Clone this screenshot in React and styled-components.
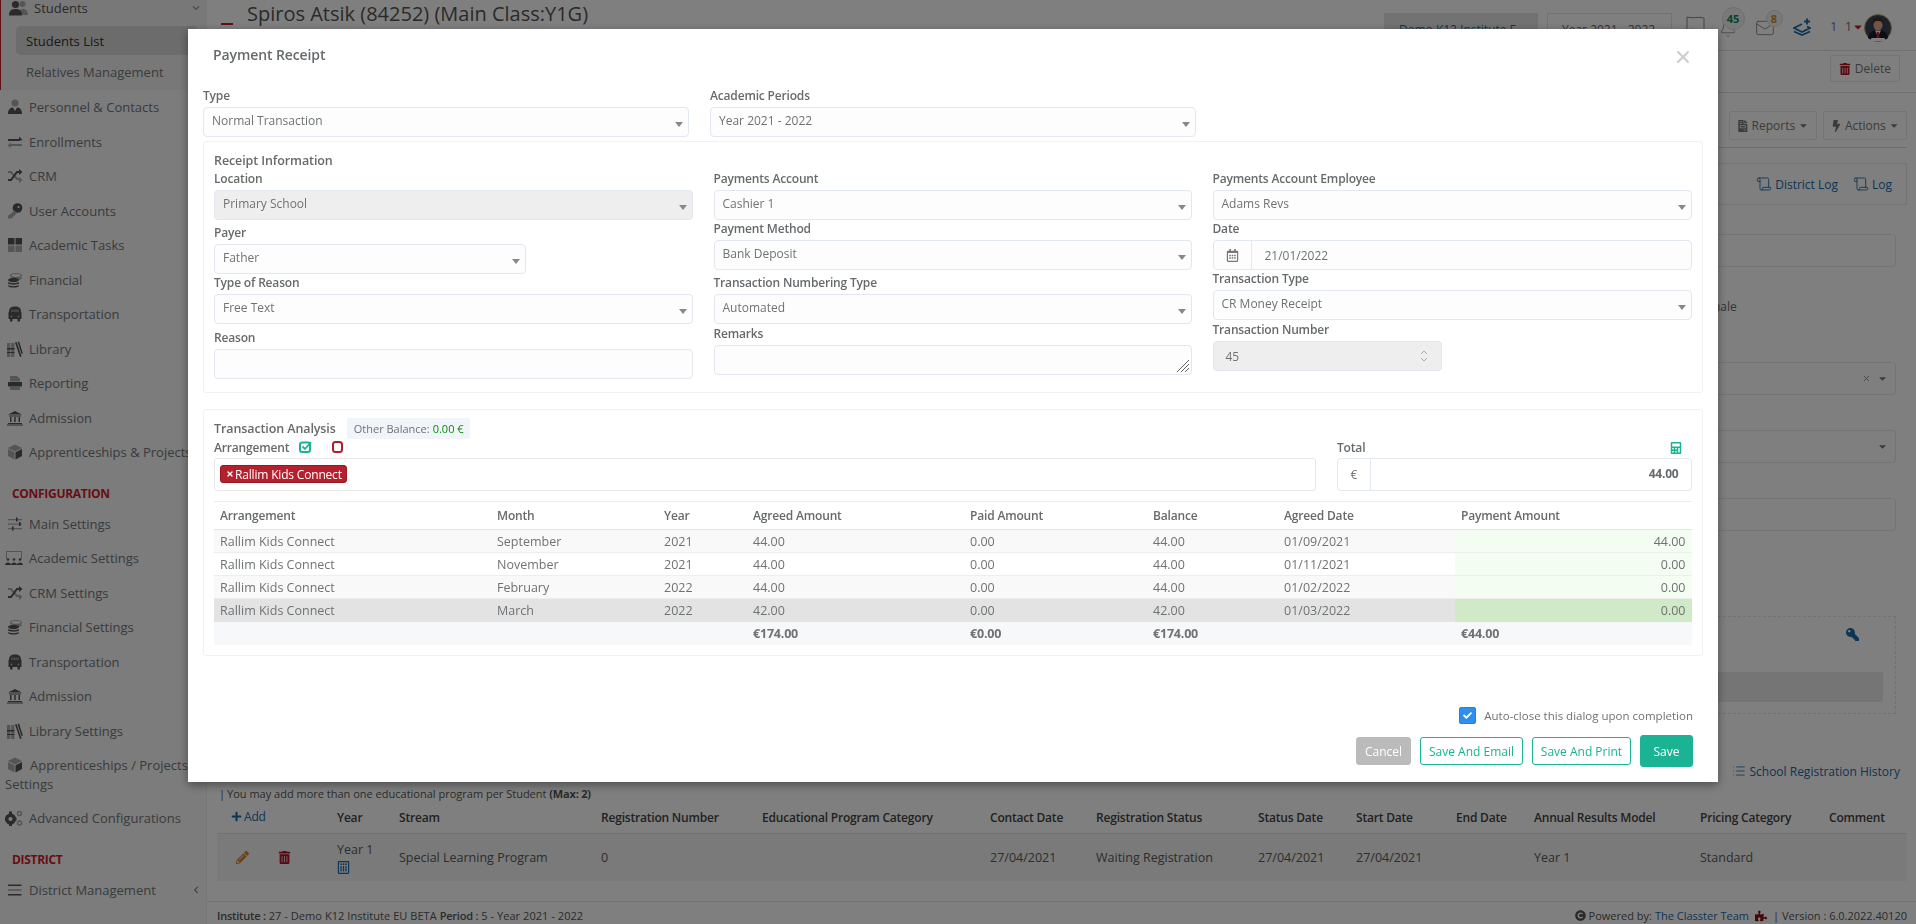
import React from "react";
import styled, { createGlobalStyle } from "styled-components";
import {
  FaTrashAlt, FaFileInvoice, FaBolt, FaPencilAlt, FaRegCalendarAlt, FaKey,
  FaCalculator, FaCheck, FaPlus, FaCopyright, FaChevronDown, FaChevronLeft, FaCaretDown, FaRegListAlt, FaPuzzlePiece,
} from "react-icons/fa";
import { Scroll, List, Bell, Mail, X } from "lucide-react";

const Global = createGlobalStyle`
  html, body { margin: 0; padding: 0; height: 100%; overflow: hidden; background: #fff; }
  body { font-family: "Open Sans", "Liberation Sans", sans-serif; font-size: 12px; color: #6f7274; }
  * { box-sizing: border-box; }
`;

const Page = styled.div`display: flex; height: 924px; width: 1916px; overflow: hidden; background: #fff;`;

/* ---------- sidebar ---------- */
const Sidebar = styled.nav`width: 207px; flex: none; background: #f8f8f8; border-right: 1px solid #eee; color: #747678; font-size: 13px;`;
const Group = styled.div`margin-top: -9px; height: 99px; border-left: 1px solid #c0222e; background: #f1f1f1;`;
const GroupHead = styled.div`height: 34px; display: flex; align-items: center; padding-left: 8px; gap: 6px; color: #555;
  > svg:last-child { margin-left: auto; margin-right: 6px; color: #999; }`;
const Sub = styled.div`height: ${p => (p.$active ? 29 : 30)}px; margin: ${p => (p.$active ? "1px 8px 2px 15px" : "0 8px 0 15px")};
  display: flex; align-items: center; padding-left: 10px; border-radius: 5px; background: ${p => (p.$active ? "#d8d8d8" : "transparent")}; color: ${p => (p.$active ? "#333" : "#747678")};`;
const Item = styled.div`height: 34.5px; display: grid; grid-template-columns: 23px auto 1fr; align-items: center; padding-left: 6px; white-space: nowrap;
  > svg:first-child { justify-self: end; margin-right: 6px; }`;
const EndChevron = styled.span`justify-self: end; margin-right: 6px; color: #888; display: flex;`;
const WrapItem = styled.div`height: 53px; padding: 8px 0 0 5px; line-height: 19px; width: 198px;
  > svg { margin: 0 7px 0 2px; vertical-align: -3px; }`;
const Section = styled.div`height: 37.2px; padding: 10px 0 0 12px; display: flex; align-items: center; color: #d01c28; font-weight: 700; font-size: 12px; letter-spacing: -.3px;`;

/* ---------- page behind the dialog ---------- */
const Main = styled.main`flex: 1; min-width: 0; display: flex; flex-direction: column; position: relative; padding-right: 9px;`;
const TopBar = styled.header`height: 51px; flex: none; margin-right: -9px; padding: 0 24px 0 14px; border-bottom: 1px solid #e1e1e1; display: flex; align-items: flex-start;`;
const Burger = styled.span`margin-top: 23px; width: 12px; height: 10px; border-top: 2px solid #c0222e; border-bottom: 2px solid #c0222e; flex: none;`;
const Title = styled.h1`margin: 0 0 0 14px; font-size: 20px; font-weight: 400; line-height: 28px; color: #555;`;
const TopRight = styled.div`margin-left: auto; display: flex; align-items: flex-start; height: 30px; margin-top: 13px;`;
const Context = styled.div`height: 32px; padding: 0 0 0 14px; display: flex; align-items: center; font-size: 12px; width: ${p => p.$w}px; margin-right: ${p => p.$mr}px;
  color: ${p => (p.$blue ? "#1a6aa8" : "#666")}; background: ${p => (p.$blue ? "#e4e4e4" : "#fff")}; border: 1px solid #e4e4e4;`;
const IconWrap = styled.span`position: relative; display: flex; color: ${p => p.$c || "#888"}; width: ${p => p.$w}px; justify-content: center; margin: ${p => p.$mt || 0}px 0 0 ${p => p.$ml || 0}px;`;
const Badge = styled.span`position: absolute; width: ${p => p.$d}px; height: ${p => p.$d}px; border-radius: 50%; background: #f2f2f2; border: 1px solid #ddd; color: ${p => p.$c};
  font-size: 11px; font-weight: 700; display: flex; align-items: center; justify-content: center; left: ${p => p.$l}px; top: ${p => p.$t}px;`;
const UserText = styled.span`margin: 4px 0 0 19px; width: 22px; line-height: 18px; font-size: 13px; letter-spacing: 2px; color: #777; white-space: nowrap;`;
const UserCaret = styled.span`color: #c0222e; display: flex; width: 12px; margin-top: 8px;`;
const AvatarBox = styled.span`display: block; margin-top: 1px;`;

const DeleteBar = styled.div`height: 42px; flex: none; margin-right: -9px; border-bottom: 1px solid #e1e1e1; display: flex; justify-content: flex-end; padding: 4px 16px 0 0;`;
const GhostBtn = styled.span`height: ${p => p.$h || 27}px; width: ${p => (p.$w ? p.$w + "px" : "auto")}; padding: 0 8px; border: 1px solid #e8e8e8; border-radius: 2px; display: inline-flex; align-items: center; justify-content: center; gap: 4px; font-size: 12px; color: #777;`;
const TrashRed = styled(FaTrashAlt)`color: #b5121e;`;
const ToolRow = styled.div`height: 55px; flex: none; padding-top: 18px; display: flex; justify-content: flex-end; gap: 6px; border-bottom: 1px solid #ddd;`;
const LogPanel = styled.div`height: 42px; margin-top: 15px; flex: none; border: 1px solid #e8e8e8; display: flex; justify-content: flex-end; align-items: center; gap: 15px; padding-right: 14px;`;
const BlueLink = styled.span`display: inline-flex; align-items: center; gap: 3px; color: #1a6aa8; font-size: 12px;`;
const FakeInput = styled.div`height: 33px; margin: ${p => p.$mt}px 11px 0 0; flex: none; border: 1px solid #e8e8e8; border-radius: 3px; display: flex; justify-content: flex-end; align-items: center; gap: 6px; padding-right: 7px; color: #777;`;
const GenderText = styled.div`margin-top: 31px; height: 18px; flex: none; padding-left: 1506px; line-height: 18px; font-size: 12px; color: #676a6c;`;
const Dotted = styled.div`height: 98px; margin: 85px 11px 0 0; flex: none; border: 1px dashed #e4e4e4; display: flex; flex-direction: column; align-items: flex-end; padding: 11px 12px 0 0;`;
const KeyIcon = styled(FaKey)`color: #1a6aa8; font-size: 13px; transform: scaleX(-1); margin-right: 24px;`;
const InnerGray = styled.div`height: 30px; width: 300px; margin-top: 31px; background: #eaeaea; border: 1px solid #e8e8e8; border-radius: 2px;`;
const HistoryRow = styled.div`height: 20px; margin-top: 47px; flex: none; display: flex; justify-content: flex-end; padding-right: 7px;`;
const Note = styled.div`margin: 5px 0 0 12px; height: 16px; line-height: 16px; flex: none; font-size: 11px; color: #555;
  &::before { content: "|"; margin-right: 2px; }
  b { font-weight: 700; letter-spacing: -.2px; }`;
const BackTable = styled.table`width: 1690px; margin-left: 10px; table-layout: fixed; border-collapse: collapse; font-size: 12px; flex: none;`;
const BackCol = styled.col`width: ${p => p.$w}px;`;
const BackTh = styled.th`height: 31px; padding: 0; text-align: left; font-weight: 600; color: #444; border-bottom: 1px solid #e4e4e4; letter-spacing: -.2px; white-space: nowrap;`;
const BackTd = styled.td`height: 48px; padding: 0; background: #f5f5f5; color: #5a5a5a; font-size: 12.5px; white-space: nowrap;`;
const AddLink = styled.span`display: inline-flex; align-items: center; gap: 2px; padding-left: 14px; color: #1a6aa8; font-weight: 400;`;
const RowIcons = styled.span`display: flex; gap: 29px; padding-left: 19px; align-items: center;`;
const Pencil = styled(FaPencilAlt)`color: #d9822b; font-size: 13px;`;
const ListGlyph = styled(FaRegListAlt)`display: block; color: #1a6aa8; font-size: 13px; transform: rotate(90deg); margin-top: 3px;`;
const Footer = styled.footer`margin: auto -9px 0 0; height: 23px; flex: none; border-top: 1px solid #e4e4e4; display: flex; align-items: center; justify-content: space-between; padding: 5px 9px 0 10px; font-size: 11px; color: #555;
  b { font-weight: 600; letter-spacing: -.2px; } a { color: #1a6aa8; }`;
const FooterLeft = styled.span`letter-spacing: .05px;`;
const FooterRight = styled.span`display: inline-flex; align-items: center; gap: 3px;`;
const TeamGlyph = styled.span`color: #8a1118; display: inline-flex; margin: 0 3px;`;

/* ---------- dialog ---------- */
const Overlay = styled.div`position: fixed; inset: 0; background: rgba(0, 0, 0, .5);`;
const Modal = styled.section`position: fixed; left: 188px; top: 29px; width: 1530px; height: 753px; background: #fff; box-shadow: 0 3px 9px rgba(0,0,0,.4); padding: 0 15px;`;
const ModalHead = styled.div`height: 59px; display: flex; align-items: flex-start; justify-content: space-between; padding: 16px 10px 0 10px;`;
const ModalTitle = styled.h2`margin: 0; font-size: 14px; line-height: 19px; font-weight: 600; color: #676a6c; letter-spacing: -.1px;`;
const Close = styled(X)`color: #ccc; margin-top: 2px;`;
const TopFields = styled.div`display: grid; grid-template-columns: 486px 486px; column-gap: 21px;`;
const Label = styled.div`height: ${p => p.$h || 20}px; line-height: ${p => (p.$h || 20) - (p.$up || 2)}px; margin-top: ${p => p.$mt || 0}px; font-size: 12px; font-weight: 600; color: #676a6c; letter-spacing: -.17px; white-space: nowrap;`;
const Select = styled.div`height: 30px; display: flex; align-items: center; justify-content: space-between; padding: 0 5px 3px 8px; font-size: 12px; color: #6f7274; width: ${p => p.$w ? p.$w + "px" : "auto"};
  border: 1px solid #e3e7ef; border-radius: 4px; background: ${p => (p.$disabled ? "#eeeeee" : "#fdfdfd")};
  &::after { content: ""; border: 4px solid transparent; border-top: 5px solid #888; border-bottom: 0; margin-top: 7px; }`;
const TextBox = styled.div`height: 30px; border: 1px solid #e3e7ef; border-radius: 4px; background: #fdfdfd; position: relative;`;
const Grip = styled.svg`position: absolute; right: 1px; bottom: 1px;`;
const DateGroup = styled.div`height: 30px; display: flex; border: 1px solid #e3e7ef; border-radius: 4px; background: #fdfdfd; font-size: 12px; color: #6f7274;`;
const Addon = styled.span`width: ${p => p.$w}px; flex: none; display: flex; align-items: center; justify-content: center; border-right: 1px solid #e3e7ef; color: #777;`;
const DateValue = styled.span`padding-left: 13px; display: flex; align-items: center;`;
const NumberBox = styled.div`height: 30px; width: 229px; display: flex; align-items: center; justify-content: space-between; padding: 0 13px 0 12px; background: #eee; border: 1px solid #e3e7ef; border-radius: 4px; font-size: 12px; color: #6f7274;`;
const Spin = styled.svg`color: #aaa;`;
const Panel = styled.div`margin-top: ${p => p.$mt}px; height: ${p => p.$h}px; border: 1px solid #f1f1f1; border-radius: 3px; padding: ${p => p.$pt}px 10px 0;`;
const PanelTitle = styled.div`height: 18px; line-height: 18px; font-size: 12.5px; font-weight: 600; color: #676a6c; letter-spacing: -.1px;`;
const Columns = styled.div`display: grid; grid-template-columns: 478.5px 478px 479px; column-gap: 21px;`;
const Column = styled.div`min-width: 0;`;
const AnalysisHead = styled.div`height: 21px; display: flex; align-items: center; gap: 11px;`;
const BalanceBadge = styled.span`height: 21px; padding: 0 6px 0 7px; background: #f1f5fa; border-radius: 2px; display: flex; align-items: center; gap: 3px; font-size: 11px; color: #6f7274;
  em { font-style: normal; color: #0a8a0a; }`;
const ArrangeGrid = styled.div`display: grid; grid-template-columns: 1102px 354.5px; column-gap: 21px;`;
const LabelRow = styled.div`height: 19px; display: flex; align-items: center; justify-content: ${p => (p.$between ? "space-between" : "flex-start")}; padding-right: ${p => (p.$between ? 10 : 0)}px;`;
const GreenCheck = styled.svg`margin: 0 0 3px 10px;`;
const RedSquare = styled.svg`margin: 0 0 3px 20px;`;
const Calc = styled(FaCalculator)`color: #1ab394; font-size: 12px; margin-bottom: 1px;`;
const MultiBox = styled.div`height: 33px; border: 1px solid #e7e7e7; border-radius: 3px; padding: 6px 5px; display: flex; align-items: flex-start;`;
const Tag = styled.span`height: 18px; padding: 0 4px 0 5px; background: #b5202f; border: 1px solid #9c1522; border-radius: 3px; color: #fff; font-size: 12px; display: inline-flex; align-items: center; gap: 1px; white-space: nowrap; letter-spacing: -.18px;`;
const TotalGroup = styled.div`height: 33px; display: flex; border: 1px solid #e3e7ef; border-radius: 4px; font-size: 12px; color: #676a6c;`;
const TotalValue = styled.span`flex: 1; display: flex; align-items: center; justify-content: flex-end; padding-right: 12px; font-weight: 700; letter-spacing: -.2px; padding-bottom: 2px;`;
const Table = styled.table`width: 1477.5px; margin-top: 10px; table-layout: fixed; border-collapse: collapse; font-size: 12.5px; color: #6f7274;`;
const Col = styled.col`width: ${p => p.$w}px;`;
const Th = styled.th`height: 28px; padding: 0 6px; text-align: left; font-size: 12px; font-weight: 600; letter-spacing: -.17px; color: #676a6c; border-top: 1px solid #eee; border-bottom: 1px solid #e5e5e5;`;
const Td = styled.td`height: 23px; padding: 0 6px; border-top: 1px solid #eee; text-align: ${p => (p.$right ? "right" : "left")}; white-space: nowrap;
  background: ${p => {
    if (p.$pay) return p.$dark ? "#d0e9c6" : "#f3fdf1";
    if (p.$dark) return "#e3e3e3";
    return p.$odd ? "#f9f9f9" : "#fff";
  }};`;
const FootTd = styled.td`height: 23px; padding: 0 6px; background: #f7f8fa; font-weight: 700; letter-spacing: -.2px;`;
const CheckRow = styled.div`margin-top: 51px; height: 17px; display: flex; align-items: center; justify-content: flex-end; gap: 8px; padding-right: 10px; font-size: 11.5px; color: #6f7274;`;
const Tick = styled.span`width: 17px; height: 17px; border-radius: 2px; background: #2d8ff0; border: 1px solid #2a7fd4; color: #fff; display: flex; align-items: center; justify-content: center; font-size: 9px;`;
const Actions = styled.div`margin-top: 11px; display: flex; justify-content: flex-end; align-items: center; gap: 9px; padding-right: 10px;`;
const Btn = styled.button`font: inherit; font-size: 12px; height: ${p => (p.$solid ? 32 : 28)}px; width: ${p => p.$w}px; padding: 0; border-radius: 3px;
  border: 1px solid ${p => (p.$gray ? "#bbb" : "#1ab394")}; background: ${p => (p.$gray ? "#bbb" : p.$solid ? "#1ab394" : "#fff")}; color: ${p => (p.$gray || p.$solid ? "#fff" : "#1ab394")};`;

/* ---------- duotone sidebar icons ---------- */
const D = "#555", L = "#aaa";
const Duo = ({ children, w = 16, h = 16 }) => <svg width={w} height={h} viewBox={`0 0 ${w} ${h}`}>{children}</svg>;
const PersonIcon = () => <Duo><circle cx="8" cy="4" r="3.6" fill={L} /><path d="M1 15c0-5 2.500-6.500 5-6.500L8 12l2-3.500c2.500 0 5 1.500 5 6.500z" fill={D} /></Duo>;
const ArrowsIcon = () => <Duo><path d="M1 5h11V2.500L15.500 6 12 7H1z" fill={D} /><path d="M15 10H4V8.500L.5 11.500 4 14v-2h11z" fill={L} /></Duo>;
const ShuffleIcon = () => <Duo><path d="M1 4h3l6 7h2" fill="none" stroke={L} strokeWidth="2" /><path d="M1 12h3l6-8h2" fill="none" stroke={D} strokeWidth="2" /><path d="M12 1l3.500 3L12 7z" fill={D} /><path d="M12 9l3.500 3-3.500 3z" fill={L} /></Duo>;
const KeyDuo = () => <Duo><circle cx="10.500" cy="5" r="4.800" fill={D} /><circle cx="11.500" cy="4" r="1.100" fill="#f8f8f8" /><path d="M7.500 7.500 1 13v2.500h3.500L10 10z" fill={L} /></Duo>;
const TilesIcon = () => <Duo><path d="M1 1h6.500v6.500H1zM8.500 1H15v6.500H8.500z" fill={D} /><path d="M1 8.500h6.500V15H1zM8.500 8.500H15V15H8.500z" fill={L} /></Duo>;
const CoinsIcon = () => <Duo><ellipse cx="9" cy="3.500" rx="5.500" ry="2" fill="none" stroke={L} strokeWidth="1.200" /><path d="M9 6.500 14.500 5v2L9 9z" fill={L} /><ellipse cx="6.500" cy="8" rx="5.500" ry="2.200" fill={D} /><path d="M1 10c1.500 1.500 9.500 1.500 11 0v1.500c-1.500 1.500-9.500 1.500-11 0zM1 13c1.500 1.500 9.500 1.500 11 0v1c-1.500 2-9.500 2-11 0z" fill={D} /></Duo>;
const BusIcon = () => <Duo><path d="M2 6c0-4 2-5.500 6-5.500S14 2 14 6z" fill={D} /><path d="M4 3.500h8V6H4z" fill="#888" /><path d="M1.500 6h13v7h-13zM3 13h2.500v2.500H3zM10.500 13H13v2.500h-2.500z" fill={D} /><circle cx="4.500" cy="10.500" r="1" fill={L} /><circle cx="11.500" cy="10.500" r="1" fill={L} /></Duo>;
const BooksIcon = () => <Duo><path d="M0 2h3.200v14H0zM4.200 2h3.200v14H4.200z" fill={L} /><path d="M0 7h7.400v1.500H0zM0 11h7.400v1H0z" fill={D} /><path d="M8 1.500l1.600-.5 5 14.500-1.600.5zM10.600 1l1.500-.5 3.800 12-1.400.5z" fill={D} /></Duo>;
const PrinterIcon = () => <Duo><path d="M3 1h7l3 3v2.500H3z" fill={L} /><path d="M1 7h14v4.500H1z" fill={D} /><path d="M3 12h10v3H3z" fill={L} /></Duo>;
const BankIcon = () => <Duo><path d="M8 1l7 3.500H1z" fill={D} /><path d="M2 5.500h12v1H2zM3 7h1.500v5H3zM7.200 7h1.500v5H7.200zM11.500 7H13v5h-1.500z" fill={D} /><path d="M1 13h14v1H1zM0 14.500h16v1H0z" fill={D} /></Duo>;
const CubeIcon = () => <Duo><path d="M8 .5 15 4 8 7.500 1 4z" fill={L} /><path d="M1 5l6.500 3.300V15.500L1 12z" fill={L} /><path d="M15 5 8.500 8.300v7.200L15 12z" fill={D} /></Duo>;
const SlidersIcon = () => <Duo><path d="M1 3h14v1.200H1zM1 7.500h14v1.200H1zM1 12h14v1.200H1z" fill={L} /><path d="M9 1.500h1.600v4H9zM12 6h1.600v4H12zM5 10.500h1.600v4H5z" fill={D} /></Duo>;
const ClassIcon = () => <Duo w={18}><path d="M1 1h16v8h-1V2H2v7H1z" fill={L} /><g fill={D}><circle cx="3" cy="9.500" r="1.300" /><circle cx="9" cy="9.500" r="1.300" /><circle cx="15" cy="9.500" r="1.300" /><path d="M0 15c0-3.500 6-3.500 6 0zM6 15c0-3.500 6-3.500 6 0zM12 15c0-3.500 6-3.500 6 0z" /></g></Duo>;
const CogsIcon = () => <Duo w={19}><circle cx="6.500" cy="9" r="3.800" fill="none" stroke={D} strokeWidth="3.400" /><path d="M5 1.500h3v3H5zM5 13.500h3v3H5zM1 7.500h2v3H1zM10 7.500h2.500v3H10z" fill={D} /><circle cx="15.500" cy="3.500" r="2" fill="none" stroke={L} strokeWidth="1.500" /><circle cx="15.500" cy="13" r="2" fill="none" stroke={L} strokeWidth="1.500" /></Duo>;
const LinesIcon = () => <Duo><path d="M1 2.500h13.500v1.600H1zM1 12h13.500v1.600H1z" fill={D} /><path d="M1 7.200h13.500v1.600H1z" fill={L} /></Duo>;
const StudentsIcon = () => <svg width="19" height="16" viewBox="0 0 19 16"><circle cx="13.500" cy="4" r="3" fill={L} /><path d="M10 15c0-4 1-6 4-6s5 2 5 6z" fill={L} /><circle cx="6.500" cy="4.500" r="3.600" fill={D} /><path d="M0 15.500c0-4.500 2-6.500 6.500-6.500s6.500 2 6.500 6.500z" fill={D} /></svg>;

const nav1 = [
  [PersonIcon, "Personnel & Contacts"], [ArrowsIcon, "Enrollments"], [ShuffleIcon, "CRM"], [KeyDuo, "User Accounts"], [TilesIcon, "Academic Tasks"],
  [CoinsIcon, "Financial"], [BusIcon, "Transportation"], [BooksIcon, "Library"], [PrinterIcon, "Reporting"], [BankIcon, "Admission"], [CubeIcon, "Apprenticeships & Projects"],
];
const nav2 = [
  [SlidersIcon, "Main Settings"], [ClassIcon, "Academic Settings"], [ShuffleIcon, "CRM Settings"], [CoinsIcon, "Financial Settings"],
  [BusIcon, "Transportation"], [BankIcon, "Admission"], [BooksIcon, "Library Settings"],
];

const Nav = ({ items }) => items.map(([I, t]) => <Item key={t}><I /><span>{t}</span></Item>);

const backCols = [120, 62, 202, 161, 228, 106, 162, 98, 100, 78, 166, 129, 78];
const backHeads = ["Year", "Stream", "Registration Number", "Educational Program Category", "Contact Date", "Registration Status", "Status Date", "Start Date", "End Date", "Annual Results Model", "Pricing Category", "Comment"];

const cols = [277, 167, 89, 217, 183, 131, 177, 236.5];
const heads = ["Arrangement", "Month", "Year", "Agreed Amount", "Paid Amount", "Balance", "Agreed Date", "Payment Amount"];
const rows = [
  ["September", "2021", "44.00", "0.00", "44.00", "01/09/2021", "44.00"],
  ["November", "2021", "44.00", "0.00", "44.00", "01/11/2021", "0.00"],
  ["February", "2022", "44.00", "0.00", "44.00", "01/02/2022", "0.00"],
  ["March", "2022", "42.00", "0.00", "42.00", "01/03/2022", "0.00"],
];

const AvatarSvg = styled.svg`display: block;`;
const Avatar = () => (
  <AvatarBox>
    <AvatarSvg width="28" height="28" viewBox="0 0 28 28">
      <circle cx="14" cy="14" r="13.500" fill="#3a4254" stroke="#c9b26a" strokeWidth="1" />
      <path d="M4 24c1-6 5-8 10-8s9 2 10 8c-3 3-17 3-20 0z" fill="#141b2b" />
      <path d="M11 16.500h6l-3 6z" fill="#eee" />
      <path d="M13 18h2l.5 6h-3z" fill="#c22030" />
      <ellipse cx="14" cy="11" rx="4.500" ry="5.500" fill="#e0ad88" />
      <path d="M9 10c-.5-5 3-6.500 5-6.500s5.500 1.500 5 6.500c-1-2.500-3-3-5-3s-4 .5-5 3z" fill="#4a2c1c" />
      <rect x="7" y="24" width="14" height="3" rx="1" fill="#fff" />
    </AvatarSvg>
  </AvatarBox>
);

export default function App() {
  return (
    <>
      <Global />
      <Page>
        <Sidebar>
          <Group>
            <GroupHead><StudentsIcon />Students<FaChevronDown size={8} /></GroupHead>
            <Sub $active>Students List</Sub>
            <Sub>Relatives Management</Sub>
          </Group>
          <Nav items={nav1} />
          <Section>CONFIGURATION</Section>
          <Nav items={nav2} />
          <WrapItem><CubeIcon />Apprenticeships / Projects Settings</WrapItem>
          <Item><CogsIcon /><span>Advanced Configurations</span></Item>
          <Section>DISTRICT</Section>
          <Item><LinesIcon /><span>District Management</span><EndChevron><FaChevronLeft size={8} /></EndChevron></Item>
        </Sidebar>
        <Main>
          <TopBar>
            <Burger />
            <Title>Spiros Atsik (84252) (Main Class:Y1G)</Title>
            <TopRight>
              <Context $blue $w={154} $mr={9}>Demo K12 Institute E</Context>
              <Context $w={125} $mr={14}>Year 2021 - 2022</Context>
              <IconWrap $w={19} $mt={3}>
                <svg width="19" height="15" viewBox="0 0 19 15" fill="none" stroke="currentColor"><path d="M1 1c5 2 12-1 17 1v13M1 1v13c5-2 12 1 17 0" /></svg>
              </IconWrap>
              <IconWrap $w={19} $mt={7} $ml={13}><Bell size={18} strokeWidth={1.1} /><Badge $d={23} $c="#12825f" $l={3.500} $t={-13.500}>45</Badge></IconWrap>
              <IconWrap $w={20} $mt={5} $ml={18}><Mail size={20} strokeWidth={1.1} /><Badge $d={17} $c="#d98a2b" $l={10.500} $t={-8.500}>8</Badge></IconWrap>
              <IconWrap $w={18} $c="#1a6aa8" $mt={5} $ml={18}>
                <svg width="18" height="18" viewBox="0 0 18 18" fill="none" stroke="currentColor" strokeWidth="1.800"><path d="M9 6 1 10l8 4 8-4-3-1.500M1 13.500l8 3.500 8-3.500M11 3.500h6M14 .5v6" /></svg>
              </IconWrap>
              <UserText>1 1</UserText>
              <UserCaret><FaCaretDown size={12} /></UserCaret>
              <Avatar />
            </TopRight>
          </TopBar>
          <DeleteBar><GhostBtn><TrashRed size={12} />Delete</GhostBtn></DeleteBar>
          <ToolRow>
            <GhostBtn $h={29} $w={88}><FaFileInvoice size={12} />Reports<FaCaretDown size={11} /></GhostBtn>
            <GhostBtn $h={29} $w={84}><FaBolt size={12} />Actions<FaCaretDown size={11} /></GhostBtn>
          </ToolRow>
          <LogPanel>
            <BlueLink><Scroll size={16} strokeWidth={1.3} />District Log</BlueLink>
            <BlueLink><Scroll size={16} strokeWidth={1.3} />Log</BlueLink>
          </LogPanel>
          <FakeInput $mt={29} />
          <GenderText>nale</GenderText>
          <FakeInput $mt={46}><X size={9} /><FaCaretDown size={11} /></FakeInput>
          <FakeInput $mt={35}><FaCaretDown size={11} /></FakeInput>
          <FakeInput $mt={35} />
          <Dotted>
            <KeyIcon />
            <InnerGray />
          </Dotted>
          <HistoryRow><BlueLink><List size={14} strokeWidth={1.4} />School Registration History</BlueLink></HistoryRow>
          <Note>You may add more than one educational program per Student <b>(Max: 2)</b></Note>
          <BackTable>
            <colgroup>{backCols.map((w, i) => <BackCol key={i} $w={w} />)}</colgroup>
            <thead>
              <tr>
                <BackTh><AddLink><FaPlus size={11} />Add</AddLink></BackTh>
                {backHeads.map(h => <BackTh key={h}>{h}</BackTh>)}
              </tr>
            </thead>
            <tbody>
              <tr>
                <BackTd><RowIcons><Pencil /><TrashRed size={13} /></RowIcons></BackTd>
                <BackTd>Year 1<ListGlyph /></BackTd>
                <BackTd>Special Learning Program</BackTd>
                <BackTd>0</BackTd>
                <BackTd />
                <BackTd>27/04/2021</BackTd>
                <BackTd>Waiting Registration</BackTd>
                <BackTd>27/04/2021</BackTd>
                <BackTd>27/04/2021</BackTd>
                <BackTd />
                <BackTd>Year 1</BackTd>
                <BackTd>Standard</BackTd>
                <BackTd />
              </tr>
            </tbody>
          </BackTable>
          <Footer>
            <FooterLeft><b>Institute :</b> 27 - Demo K12 Institute EU BETA <b>Period :</b> 5 - Year 2021 - 2022</FooterLeft>
            <FooterRight><FaCopyright size={11} />Powered by: <a>The Classter Team</a><TeamGlyph><FaPuzzlePiece size={12} /></TeamGlyph>| Version : 6.0.2022.40120</FooterRight>
          </Footer>
        </Main>
      </Page>

      <Overlay />
      <Modal>
        <ModalHead>
          <ModalTitle>Payment Receipt</ModalTitle>
          <Close size={20} strokeWidth={2.4} />
        </ModalHead>
        <TopFields>
          <div><Label $h={19} $up={4}>Type</Label><Select>Normal Transaction</Select></div>
          <div><Label $h={19} $up={4}>Academic Periods</Label><Select>Year 2021 - 2022</Select></div>
        </TopFields>
        <Panel $mt={4} $h={252} $pt={10}>
          <PanelTitle>Receipt Information</PanelTitle>
          <Columns>
            <Column>
              <Label>Location</Label><Select $disabled>Primary School</Select>
              <Label $mt={4}>Payer</Label><Select $w={312}>Father</Select>
              <Label>Type of Reason</Label><Select>Free Text</Select>
              <Label $mt={5}>Reason</Label><TextBox />
            </Column>
            <Column>
              <Label>Payments Account</Label><Select>Cashier 1</Select>
              <Label>Payment Method</Label><Select>Bank Deposit</Select>
              <Label $mt={4}>Transaction Numbering Type</Label><Select>Automated</Select>
              <Label $h={21}>Remarks</Label>
              <TextBox>
                <Grip width="14" height="14" viewBox="0 0 14 14" stroke="#666" fill="none"><path d="M13 1 1 13M13 5 5 13M13 9l-4 4" /></Grip>
              </TextBox>
            </Column>
            <Column>
              <Label>Payments Account Employee</Label><Select>Adams Revs</Select>
              <Label>Date</Label>
              <DateGroup><Addon $w={38}><FaRegCalendarAlt size={13} /></Addon><DateValue>21/01/2022</DateValue></DateGroup>
              <Label>Transaction Type</Label><Select>CR Money Receipt</Select>
              <Label $h={21}>Transaction Number</Label>
              <NumberBox>45
                <Spin width="8" height="14" viewBox="0 0 8 14" fill="none" stroke="currentColor"><path d="M1 5l3-3 3 3M1 9l3 3 3-3" /></Spin>
              </NumberBox>
            </Column>
          </Columns>
        </Panel>
        <Panel $mt={16} $h={247} $pt={8}>
          <AnalysisHead>
            <PanelTitle>Transaction Analysis</PanelTitle>
            <BalanceBadge>Other Balance: <em>0.00 €</em></BalanceBadge>
          </AnalysisHead>
          <ArrangeGrid>
            <div>
              <LabelRow>
                <Label $up={3}>Arrangement</Label>
                <GreenCheck width="13" height="12" viewBox="0 0 13 12" fill="none"><rect x="1" y="1.500" width="10" height="9.500" rx="2" stroke="#1ab394" strokeWidth="2" /><path d="M3.500 5.500 6 8l6-7" stroke="#1ab394" strokeWidth="1.800" /></GreenCheck>
                <RedSquare width="11" height="12" viewBox="0 0 11 12" fill="none"><rect x="1" y="1" width="9" height="10" rx="2.500" stroke="#b71c2c" strokeWidth="2" /></RedSquare>
              </LabelRow>
              <MultiBox><Tag><X size={8} strokeWidth={4} />Rallim Kids Connect</Tag></MultiBox>
            </div>
            <div>
              <LabelRow $between><Label $up={3}>Total</Label><Calc /></LabelRow>
              <TotalGroup><Addon $w={33}>€</Addon><TotalValue>44.00</TotalValue></TotalGroup>
            </div>
          </ArrangeGrid>
          <Table>
            <colgroup>{cols.map((w, i) => <Col key={i} $w={w} />)}</colgroup>
            <thead><tr>{heads.map(h => <Th key={h}>{h}</Th>)}</tr></thead>
            <tbody>
              {rows.map((r, i) => {
                const odd = i % 2 === 0, dark = i === 3;
                return (
                  <tr key={r[0]}>
                    <Td $odd={odd} $dark={dark}>Rallim Kids Connect</Td>
                    {r.slice(0, 6).map((v, j) => <Td key={j} $odd={odd} $dark={dark}>{v}</Td>)}
                    <Td $pay $dark={dark} $right>{r[6]}</Td>
                  </tr>
                );
              })}
            </tbody>
            <tfoot>
              <tr>
                <FootTd /><FootTd /><FootTd />
                <FootTd>€174.00</FootTd><FootTd>€0.00</FootTd><FootTd>€174.00</FootTd><FootTd /><FootTd>€44.00</FootTd>
              </tr>
            </tfoot>
          </Table>
        </Panel>
        <CheckRow><Tick><FaCheck /></Tick>Auto-close this dialog upon completion</CheckRow>
        <Actions>
          <Btn $gray $w={55}>Cancel</Btn>
          <Btn $w={103}>Save And Email</Btn>
          <Btn $w={99}>Save And Print</Btn>
          <Btn $solid $w={53}>Save</Btn>
        </Actions>
      </Modal>
    </>
  );
}
